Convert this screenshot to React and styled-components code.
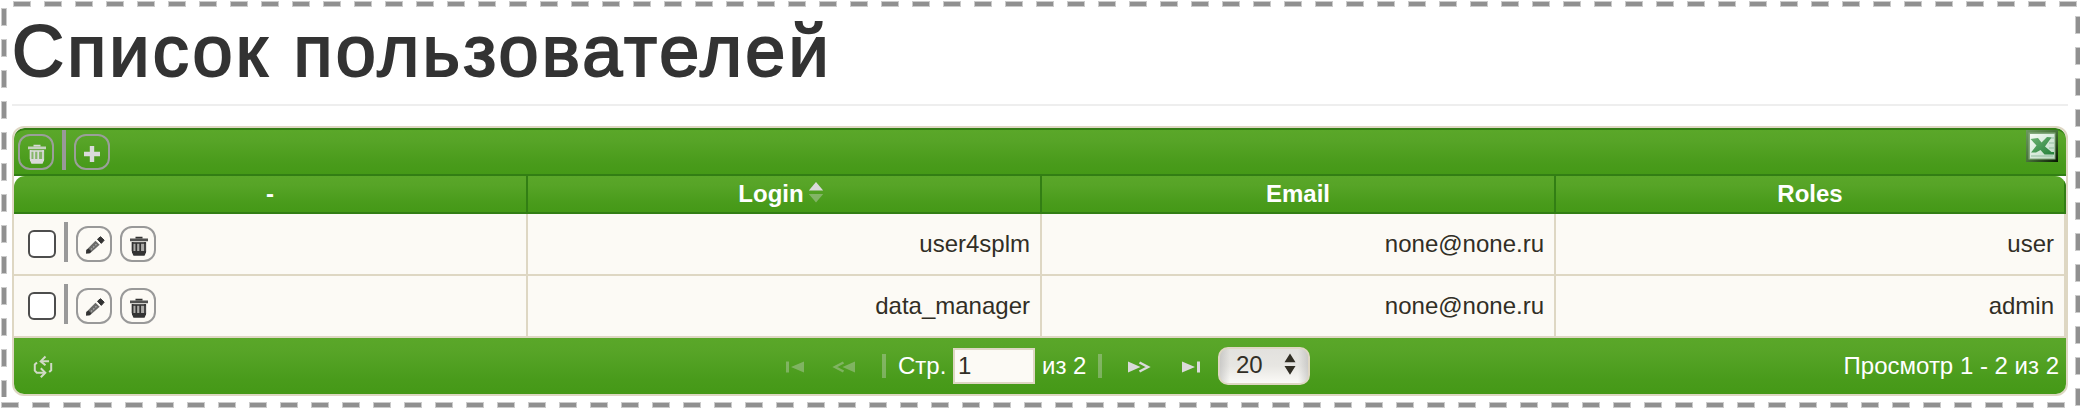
import React from "react";
import styled, { createGlobalStyle, css } from "styled-components";

const GREEN = "linear-gradient(to bottom, #5aa729 0%, #57a427 25%, #499b1b 75%, #459917 100%)";
const DARK = "#327e14";
const SAND = "#ded7c3";
const CREAM = "#fcfaf5";
const GRAY = "#999";

const GlobalStyle = createGlobalStyle`
  *, *::before, *::after { box-sizing: border-box; }
  body {
    margin: 0;
    background: #fff;
    font-family: "Liberation Sans", Arial, sans-serif;
    font-size: 24px;
    color: #312e25;
  }
`;

const dash = (dir, on, color) =>
  `repeating-linear-gradient(to ${dir}, ${color} 0 ${on}px, transparent ${on}px 31px)`;

const Frame = styled.div`
  width: 2080px;
  height: 410px;
  padding: 0 12px;
  background-color: #fff;
  background-repeat: no-repeat;
  background-image:
    ${dash("right", 16, "#909090")}, ${dash("right", 16, "#909090")},
    ${dash("bottom", 16, "#909090")}, ${dash("bottom", 16, "#909090")},
    ${dash("right", 18, "#cbcbcb")}, ${dash("right", 18, "#cbcbcb")},
    ${dash("bottom", 18, "#cbcbcb")}, ${dash("bottom", 18, "#cbcbcb")};
  background-size:
    2063px 4px, 2063px 4px, 4px 388px, 4px 390px,
    2064px 6px, 2064px 6px, 6px 389px, 6px 391px;
  background-position:
    14px 2px, 2px 403px, 2px 9px, 2076px 17px,
    13px 1px, 1px 402px, 1px 8px, 2075px 16px;
`;

const Title = styled.h1`
  margin: 0;
  height: 106px;
  padding-top: 10px;
  border-bottom: 2px solid #eee;
  font-size: 72px;
  line-height: 82px;
  font-weight: 400;
  color: #333;
  white-space: nowrap;
  letter-spacing: 3.15px;
  -webkit-text-stroke: 2px #333;
`;

const Grid = styled.section`
  margin-top: 20px;
  height: 270px;
  border: 2px solid ${SAND};
  border-radius: 12px;
  overflow: hidden;
  background: #fff;
`;

const Toolbar = styled.div`
  display: flex;
  align-items: flex-start;
  height: 48px;
  padding: 4px 8px 0 4px;
  border-top: 2px solid ${DARK};
  border-bottom: 2px solid ${DARK};
  border-radius: 11px 11px 0 0;
  background: ${GREEN};
`;

const IconButton = styled.button`
  display: flex;
  flex: none;
  width: 36px;
  height: 36px;
  padding: 0;
  margin-left: ${(p) => p.$gap || 0}px;
  border: 2px solid ${(p) => (p.$light ? "#9b9f9a" : GRAY)};
  border-radius: 12px;
  background: transparent;
  color: ${(p) => (p.$light ? "#dadada" : "#333")};
  svg { display: block; }
`;

const Divider = styled.span`
  flex: none;
  width: 4px;
  height: 40px;
  margin: -4px 0 0 8px;
  background: #999;
`;

const ExcelButton = styled.button`
  display: flex;
  margin: -4px 0 0 auto;
  padding: 0;
  border: 0;
  background: none;
`;

const columns = css`
  display: grid;
  grid-template-columns: 514px 514px 514px 510px;
`;

const HeaderRow = styled.div`
  ${columns}
  height: 38px;
  border-radius: 11px 11px 0 0;
  border-bottom: 2px solid ${DARK};
  background: ${GREEN};
  overflow: hidden;
`;

const HeaderCell = styled.div`
  display: flex;
  justify-content: center;
  padding-right: ${(p) => (p.$sortable ? 6 : 0)}px;
  border-right: 2px solid ${DARK};
  color: #fff;
  font-weight: 700;
  line-height: 35px;
  svg { margin: 5px 0 0 4px; }
`;

const Row = styled.div`
  ${columns}
  height: 62px;
  border-bottom: 2px solid ${SAND};
  background: ${CREAM};
`;

const Cell = styled.div`
  padding-right: 10px;
  border-right: 2px solid ${SAND};
  text-align: right;
  line-height: 60px;
`;

const ActionCell = styled(Cell)`
  display: flex;
  padding: 12px 0 0 14px;
`;

const Check = styled.input.attrs({ type: "checkbox" })`
  appearance: none;
  flex: none;
  width: 28px;
  height: 28px;
  margin: 4px 0 0;
  border: 2px solid #4d4d4d;
  border-radius: 6px;
  background: #fff;
`;

const Footer = styled.div`
  display: grid;
  grid-template-columns: 400px 1fr 400px;
  height: 56px;
  background: ${GREEN};
  color: #fff;
  line-height: 55px;
`;

const Refresh = styled.div`
  padding: 16px 0 0 18px;
  svg { display: block; }
`;

const Pager = styled.div`
  display: flex;
  align-items: flex-start;
  padding-left: 372px;
  white-space: nowrap;
`;

const PageArrow = styled.span`
  flex: none;
  display: flex;
  margin: 22px 0 0 ${(p) => p.$gap || 0}px;
  color: #dadada;
  opacity: ${(p) => (p.$off ? 0.35 : 1)};
`;

const PagerLine = styled.span`
  flex: none;
  width: 4px;
  height: 24px;
  margin: 16px 0 0 ${(p) => p.$gap}px;
  background: #dadada;
  opacity: 0.35;
`;

const PagerText = styled.span`
  flex: none;
  width: ${(p) => p.$width}px;
  margin-left: ${(p) => p.$gap}px;
`;

const PageInput = styled.input`
  flex: none;
  width: 82px;
  height: 36px;
  margin: 10px 0 0;
  padding: 0 3px;
  border: 2px solid ${SAND};
  background: ${CREAM};
  color: #312e25;
  font: 24px "Liberation Sans", Arial, sans-serif;
`;

const PageSize = styled.div`
  display: flex;
  flex: none;
  justify-content: space-between;
  width: 92px;
  height: 38px;
  margin: 9px 0 0 18px;
  padding: 0 12px 0 16px;
  border: 2px solid ${SAND};
  border-radius: 10px;
  background:
    linear-gradient(to right, rgba(170,170,170,.45), transparent 10px calc(100% - 10px), rgba(170,170,170,.45)),
    linear-gradient(#e2e1de, #e7e6e2 50%, #fbfaf7);
  color: #312e25;
  line-height: 31px;
  svg { margin-top: 4px; }
`;

const Summary = styled.div`
  padding-right: 7px;
  text-align: right;
`;

const Trash = () => (
  <svg width="32" height="32" viewBox="0 0 32 32">
    <path d="M8 10.500h18v2.700H8z" fill="currentColor" opacity=".85" />
    <path d="M13.500 10.500V8.800h7v1.700" fill="currentColor" />
    <path d="M9.700 14.300h14.600v9.200q0 1.500-1.500 1.500H11.200q-1.500 0-1.500-1.500z" fill="currentColor" opacity=".4" />
    <path d="M10.600 14v9M14.300 15v8M18.200 15v8M23 14v9M10 15h14" fill="none" stroke="currentColor" strokeWidth="1.7" />
    <path d="M10 23h14v1.500l-1.500 3.200h-11L10 24.500z" fill="currentColor" />
  </svg>
);

const Plus = () => (
  <svg width="32" height="32" viewBox="0 0 32 32">
    <path d="M8 18h16M16 10v16" stroke="currentColor" strokeWidth="4.4" strokeLinejoin="round" />
  </svg>
);

const Pencil = () => (
  <svg width="32" height="32" viewBox="0 0 32 32">
    <path d="M8 25.500L8.300 22 17.500 12.800l4.200 4L12 25.200z" fill="currentColor" opacity=".72" />
    <path d="M8 25.500l.4-3.500 2-1.500 3 3-1.900 1.700z" fill="currentColor" />
    <path d="M13 21.500l6-5.800" stroke="#aaa" strokeWidth="1.3" strokeDasharray="1.6 1.4" />
    <path d="M19.500 11.200l3-2.500 3.700 3.500-2.900 3.200z" fill="currentColor" stroke="currentColor" strokeLinejoin="round" />
  </svg>
);

const RefreshIcon = () => (
  <svg width="22" height="26" viewBox="0 0 22 26">
    <g fill="none" stroke="#d0dac6" strokeWidth="2">
      <path d="M5 8.500L2.800 10.500v6.200l2 2H13" />
      <path d="M9 7.300h8M19.200 9v7.200l-2 1.800" />
      <path d="M13.500 2.500L8.700 7.300l4.800 3.900M8.800 14.200l4.500 4.500-4.500 4.600" />
    </g>
  </svg>
);

const SortIcon = () => (
  <svg width="16" height="22" viewBox="0 0 16 22">
    <path d="M.8 9.500L8 1l7.200 8.500z" fill="#dadada" />
    <path d="M.8 13h14.400L8 21.500z" fill="#dadada" opacity=".38" />
  </svg>
);

const First = () => (
  <svg width="18" height="14" viewBox="0 0 18 14">
    <path d="M0 1.500h3v11H0zM18 1.500v11L5 7z" fill="currentColor" />
  </svg>
);

const Prev = () => (
  <svg width="24" height="14" viewBox="0 0 24 14">
    <path d="M23 1.500v11L10.500 7z" fill="currentColor" />
    <path d="M11.500 2.500L3 7l8.500 4.500" fill="none" stroke="currentColor" strokeWidth="2.5" />
  </svg>
);

const Flip = styled.span`
  display: flex;
  transform: scaleX(-1);
`;

const Stepper = () => (
  <svg width="12" height="22" viewBox="0 0 12 22">
    <path d="M.5 9.300L6 .5l5.500 8.800zM.5 13h11L6 21.800z" fill="#312e25" />
  </svg>
);

const Excel = () => (
  <svg width="32" height="32" viewBox="0 0 32 32">
    <defs>
      <linearGradient id="bevel" x1="0" y1="0" x2="1" y2="1">
        <stop offset="0" stopColor="#6d9960" />
        <stop offset=".5" stopColor="#477239" />
        <stop offset="1" stopColor="#061400" />
      </linearGradient>
      <linearGradient id="sheet" x1="0" y1="0" x2="1" y2="1">
        <stop offset="0" stopColor="#f5fbf4" />
        <stop offset="1" stopColor="#bbd9c3" />
      </linearGradient>
      <linearGradient id="cross" x1="0" y1="0" x2="1" y2="1">
        <stop offset="0" stopColor="#6eb173" />
        <stop offset="1" stopColor="#23803a" />
      </linearGradient>
    </defs>
    <path d="M0 0h32v32H0z" fill="url(#bevel)" />
    <path d="M2.500 2.500h27v27h-27z" fill="#82a77b" />
    <path d="M4 4h24.500v24.500H4z" fill="url(#sheet)" />
    <path d="M21 8h7M23 13h5M23 18h5M5 26h22" stroke="#91bda0" strokeWidth="1" />
    <path d="M4.500 9l7.500-1 3.500 4.500L21 7l4.500.5-6.500 9 6.500 5.500h2.500v2.500h-9.500L14.500 20 10 22.500H5l5.500-7z" fill="url(#cross)" />
  </svg>
);

const USERS = [
  { login: "user4splm", email: "none@none.ru", role: "user" },
  { login: "data_manager", email: "none@none.ru", role: "admin" },
];

export default function App() {
  return (
    <>
      <GlobalStyle />
      <Frame>
        <Title>Список пользователей</Title>
        <Grid>
          <Toolbar>
            <IconButton $light><Trash /></IconButton>
            <Divider />
            <IconButton $light $gap={8}><Plus /></IconButton>
            <ExcelButton><Excel /></ExcelButton>
          </Toolbar>
          <HeaderRow>
            <HeaderCell>-</HeaderCell>
            <HeaderCell $sortable>Login<SortIcon /></HeaderCell>
            <HeaderCell>Email</HeaderCell>
            <HeaderCell>Roles</HeaderCell>
          </HeaderRow>
          {USERS.map((u) => (
            <Row key={u.login}>
              <ActionCell>
                <Check />
                <Divider />
                <IconButton $gap={8}><Pencil /></IconButton>
                <IconButton $gap={8}><Trash /></IconButton>
              </ActionCell>
              <Cell>{u.login}</Cell>
              <Cell>{u.email}</Cell>
              <Cell>{u.role}</Cell>
            </Row>
          ))}
          <Footer>
            <Refresh><RefreshIcon /></Refresh>
            <Pager>
              <PageArrow $off><First /></PageArrow>
              <PageArrow $off $gap={28}><Prev /></PageArrow>
              <PagerLine $gap={26} />
              <PagerText $gap={12} $width={55}>Стр.</PagerText>
              <PageInput defaultValue="1" />
              <PagerText $gap={7} $width={56}>из 2</PagerText>
              <PagerLine $gap={0} />
              <PageArrow $gap={25}><Flip><Prev /></Flip></PageArrow>
              <PageArrow $gap={31}><Flip><First /></Flip></PageArrow>
              <PageSize>20<Stepper /></PageSize>
            </Pager>
            <Summary>Просмотр 1 - 2 из 2</Summary>
          </Footer>
        </Grid>
      </Frame>
    </>
  );
}
